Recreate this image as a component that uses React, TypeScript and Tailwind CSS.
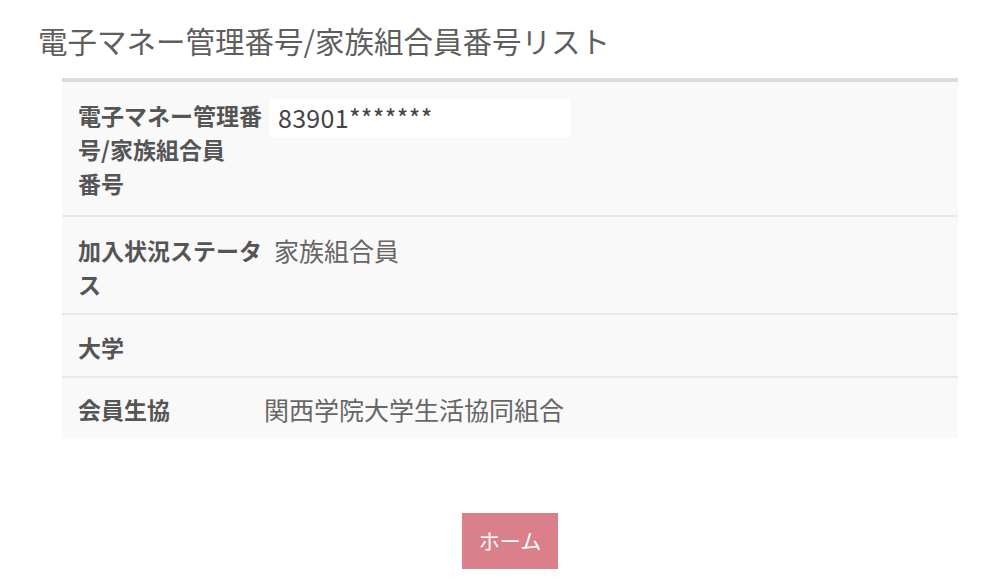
const font = { fontFamily: '"Noto Sans CJK JP", "Noto Sans", sans-serif' }

type Row = {
  label: string[]
  value?: string
  boxed?: boolean
  valueGap: string
  pad: string
}

const rows: Row[] = [
  { label: ["電子マネー管理番", "号/家族組合員", "番号"], value: "83901*******", boxed: true, valueGap: "ml-[12px]", pad: "pt-4 pb-[15px]" },
  { label: ["加入状況ステータ", "ス"], value: "家族組合員", valueGap: "ml-[16px]", pad: "pt-4 pb-3" },
  { label: ["大学"], valueGap: "ml-[16px]", pad: "pt-[15px] pb-3" },
  { label: ["会員生協"], value: "関西学院大学生活協同組合", valueGap: "ml-[6px]", pad: "pt-[14px] pb-3" },
]

function InfoRow({ row, last }: { row: Row; last: boolean }) {
  return (
    <div className={`flex items-start pl-4 ${row.pad} ${last ? "" : "border-b-2 border-[#e9e9e9]"}`}>
      <div className="w-[180px] shrink-0 text-[23px] leading-[34px] font-bold text-[#555]">
        {row.label.map((l) => (
          <div key={l} className="whitespace-nowrap">{l}</div>
        ))}
      </div>
      {row.value && (
        row.boxed ? (
          <div className={`${row.valueGap} w-[300px] h-[38px] bg-white px-2 mt-[1px] flex items-center text-[25px] tracking-[0.3px] text-[#444]`}>
            {row.value}
          </div>
        ) : (
          <div className={`${row.valueGap} text-[25px] leading-[34px] text-[#666]`}>{row.value}</div>
        )
      )}
    </div>
  )
}

export default function App() {
  return (
    <div className="w-[1000px] h-[583px] bg-white overflow-hidden" style={font}>
      <h1 className="pl-[38px] pt-[18px] text-[29.5px] leading-[44px] font-normal text-[#5e5e5e]">
        電子マネー管理番号/家族組合員番号リスト
      </h1>
      <div className="ml-[62px] mt-[16px] w-[896px]">
        <div className="h-[4px] bg-[#dcdcdc]" />
        <div className="bg-[#f9f9f9]">
          {rows.map((r, i) => (
            <InfoRow key={r.label[0]} row={r} last={i === rows.length - 1} />
          ))}
        </div>
        <div className="flex justify-center mt-[75px]">
          <button className="w-[96px] h-[56px] bg-[#d9808a] text-white text-[21px]">ホーム</button>
        </div>
      </div>
    </div>
  )
}
